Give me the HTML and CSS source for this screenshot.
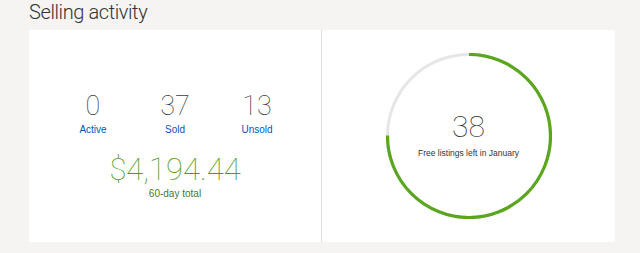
FILE: index.html
```
<!DOCTYPE html>
<html>
<head>
<meta charset="utf-8">
<link rel="stylesheet" href="styles.css">
</head>
<body>
<h2 class="title">Selling activity</h2>
<div class="card">
  <div class="left">
    <div class="stats">
      <div class="stat"><div class="num">0</div><a class="label">Active</a></div>
      <div class="stat"><div class="num">37</div><a class="label">Sold</a></div>
      <div class="stat"><div class="num">13</div><a class="label">Unsold</a></div>
    </div>
    <div class="total">
      <div class="amount">$4,194.44</div>
      <div class="total-label">60-day total</div>
    </div>
  </div>
  <div class="right">
    <div class="ring">
      <svg class="ring-svg" width="166" height="166" viewBox="0 0 166 166">
        <circle cx="83" cy="83" r="81.5" fill="none" stroke="#e6e6e6" stroke-width="3"/>
        <circle cx="83" cy="83" r="81.5" fill="none" stroke="#5ba61f" stroke-width="3.2" stroke-dasharray="384.07 512.1" transform="rotate(-90 83 83)"/>
      </svg>
      <div class="ring-text">
        <div class="ring-num">38</div>
        <div class="ring-label">Free listings left in January</div>
      </div>
    </div>
  </div>
</div>
</body>
</html>
```
FILE: styles.css
```
html, body {
  margin: 0;
  padding: 0;
}
body {
  background: #f5f4f2;
  font-family: "Liberation Sans", Arial, sans-serif;
  width: 640px;
  height: 253px;
  overflow: hidden;
}
.title {
  margin: 0;
  padding: 0 0 0 29px;
  height: 30px;
  font-family: "Roboto", "Liberation Sans", sans-serif;
  font-weight: 300;
  font-size: 20px;
  letter-spacing: -0.4px;
  line-height: 25px;
  color: #333;
}
.card {
  margin-left: 29px;
  width: 586px;
  height: 212px;
  background: #fff;
  display: grid;
  grid-template-columns: 293px 293px;
}
.left {
  border-right: 1px solid #dedede;
  display: flex;
  flex-direction: column;
  align-items: center;
  padding-top: 61px;
}
.stats {
  display: flex;
}
.stat {
  width: 82px;
  display: flex;
  flex-direction: column;
  align-items: center;
}
.num {
  font-family: "Roboto", "Liberation Sans", sans-serif;
  font-weight: 100;
  font-size: 27px;
  line-height: 30px;
  color: #3a3a3a;
}
.label {
  font-size: 10px;
  line-height: 12px;
  color: #0654ba;
  margin-top: 3px;
}
.total {
  display: flex;
  flex-direction: column;
  align-items: center;
  margin-top: 18px;
}
.amount {
  font-family: "Roboto", "Liberation Sans", sans-serif;
  font-weight: 100;
  font-size: 31px;
  line-height: 32px;
  color: #4f9a1c;
}
.total-label {
  font-size: 10px;
  line-height: 12px;
  color: #3f7d1f;
  margin-top: 2px;
}
.right {
  display: flex;
  align-items: center;
  justify-content: center;
}
.ring {
  display: grid;
  width: 166px;
  height: 166px;
}
.ring-svg, .ring-text {
  grid-area: 1 / 1;
}
.ring-text {
  display: flex;
  flex-direction: column;
  align-items: center;
  justify-content: center;
  padding-bottom: 2px;
}
.ring-num {
  font-family: "Roboto", "Liberation Sans", sans-serif;
  font-weight: 100;
  font-size: 30px;
  line-height: 32px;
  color: #333;
}
.ring-label {
  font-size: 8.5px;
  line-height: 12px;
  color: #333;
  margin-top: 4px;
}
```
